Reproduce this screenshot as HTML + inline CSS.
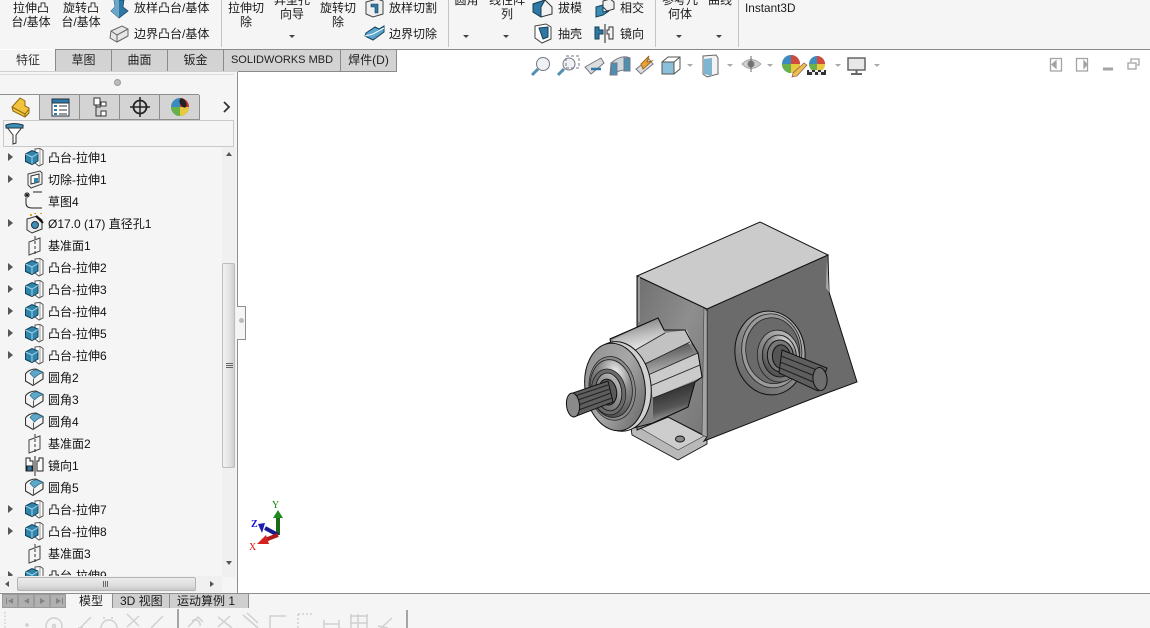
<!DOCTYPE html>
<html><head><meta charset="utf-8"><style>
html,body{margin:0;padding:0;width:1150px;height:628px;overflow:hidden;background:#fff;font-family:"Liberation Sans","Noto Sans CJK SC",sans-serif;font-size:12px;color:#111}
.a{position:absolute}
.t{position:absolute;white-space:nowrap;line-height:13px;font-size:12px;color:#1a1a1a}
.c{text-align:center}
.tab{position:absolute;top:50px;height:21px;background:#d3d3d3;border-right:1px solid #8a8a8a;border-bottom:1px solid #8a8a8a;text-align:center;line-height:21px;font-size:12px;color:#222;box-sizing:content-box}
.row{position:absolute;left:48px;white-space:nowrap;line-height:14px;font-size:12px;color:#111}
.sep{position:absolute;top:0;width:1px;height:47px;background:#c4c4c4}
.ar{position:absolute;width:0;height:0;border-left:3px solid transparent;border-right:3px solid transparent;border-top:3px solid #444}
.tw{position:absolute;left:8px;width:0;height:0;border-top:4px solid transparent;border-bottom:4px solid transparent;border-left:5px solid #555}
</style></head><body>
<svg width="0" height="0" style="position:absolute"><defs>
<g id="boss"><path d="M10 1 L15 0.500 L18 2.500 V16 L14 18 L10 15Z" fill="#fff" stroke="#555" stroke-width="1"/><path d="M15 1 V17" stroke="#999"/><path d="M0.500 6 L7 2.500 L13 5 V13 L7 16.500 L0.500 13.500Z" fill="#2f86ad" stroke="#123f58" stroke-width="1"/><path d="M0.500 6 L7 9 L13 5.500 M7 9 V16" fill="none" stroke="#a5d3e8" stroke-width="1"/></g>
<g id="cut"><path d="M2 4 L14 1 L16 3 V14 L5 18 L2 15Z" fill="#f2f2f2" stroke="#444"/><path d="M5 6 L13 4 V12 L5 14Z" fill="#fff" stroke="#333"/><path d="M8 8 h4 v4 l-4 1z" fill="#2f86ad"/></g>
<g id="fil"><path d="M0.500 6 C3 2 8 1 11 1 L18 4.500 V11 L8 17.500 L0.500 13Z" fill="#f4f4f4" stroke="#333" stroke-width="1.100"/><path d="M5 5.500 C7 2.500 10 1.500 12 2 L18 4.500 C15 5.500 12 7 9.500 10 Z" fill="#5fa7c8" stroke="#2b6a88" stroke-width=".7"/><path d="M8.500 10.500V17.500" stroke="#555"/></g>
<g id="pln"><path d="M1 4 L12 0 V13 L1 17Z" fill="none" stroke="#444"/><path d="M7 -2 V19" stroke="#333" stroke-dasharray="3 2"/></g>
</defs></svg>

<!-- Top toolbar -->
<div class="a" style="left:0;top:0;width:1150px;height:49px;background:#f5f5f5"></div>
<div class="a" style="left:56px;top:49px;width:1094px;height:1px;background:#8a8a8a"></div>
<div class="a" style="left:0;top:50px;width:56px;height:22px;background:#f5f5f5"></div>
<div class="t c" style="left:6px;top:1px;width:50px;line-height:14px">拉伸凸<br>台/基体</div>
<div class="t c" style="left:56px;top:1px;width:50px;line-height:14px">旋转凸<br>台/基体</div>
<svg class="a" style="left:108px;top:0" width="24" height="46"><path d="M6 0 H16 L15 7 L20 11 L11 18 L3 11 L7 7Z" fill="#2f78a5" stroke="#123f58" stroke-width=".7"/><path d="M11 0V18 L3 11 L7 7 L6 0Z" fill="#6aa7cb"/><path d="M3 31 L14 26 L20 29 L20 36 L9 42 L2 38Z" fill="#e6e6e6" stroke="#666"/><path d="M3 31 L9 35 L20 29 M9 35V42" fill="none" stroke="#666"/></svg>
<div class="t" style="left:134px;top:2px">放样凸台/基体</div>
<div class="t" style="left:134px;top:28px">边界凸台/基体</div>
<div class="sep" style="left:221px"></div>
<div class="t c" style="left:222px;top:1px;width:48px;line-height:14px">拉伸切<br>除</div>
<div class="t c" style="left:268px;top:-7px;width:48px;line-height:14px">异型孔<br>向导</div>
<div class="ar" style="left:289px;top:35px"></div>
<div class="t c" style="left:314px;top:1px;width:48px;line-height:14px">旋转切<br>除</div>
<svg class="a" style="left:363px;top:-1px" width="24" height="46"><path d="M3 3 L14 0 L20 2 V15 L10 18 L3 15Z" fill="#eee" stroke="#444"/><path d="M8 5 H15 V14 H12 V8 H8Z" fill="#2f78a5" stroke="#123f58" stroke-width=".6"/><path d="M3 34 L12 28 L16 30 L21 27 V33 L10 41 L2 37Z" fill="#5aa6cc" stroke="#123f58"/><path d="M2 37 L10 35 L21 29" stroke="#fff" fill="none"/></svg>
<div class="t" style="left:389px;top:2px">放样切割</div>
<div class="t" style="left:389px;top:28px">边界切除</div>
<div class="sep" style="left:448px"></div>
<div class="t c" style="left:450px;top:-6px;width:33px">圆角</div>
<div class="ar" style="left:463px;top:35px"></div>
<div class="t c" style="left:484px;top:-7px;width:46px;line-height:14px">线性阵<br>列</div>
<div class="ar" style="left:503px;top:35px"></div>
<svg class="a" style="left:532px;top:-1px" width="24" height="46"><path d="M1 5 L13 1 L20 8 V15 L9 18 L1 13Z" fill="#f2f2f2" stroke="#333"/><path d="M1 5 L13 1 L9 8 V18 L1 13Z" fill="#2f78a5" stroke="#123f58"/><path d="M3 27 L14 25 L19 28 V40 L10 44 L3 39Z" fill="#fff" stroke="#444"/><path d="M7 29 L16 28 V38 L11 40Z" fill="#2f78a5" stroke="#123f58"/></svg>
<div class="t" style="left:558px;top:2px">拔模</div>
<div class="t" style="left:558px;top:28px">抽壳</div>
<svg class="a" style="left:594px;top:-1px" width="24" height="46"><path d="M9 2 L16 0 L20 3 V10 L13 12 L9 8Z" fill="#f0f0f0" stroke="#333"/><path d="M2 8 L9 6 V13 L15 12 L9 16 L2 18Z" fill="#3b8db5" stroke="#123f58"/><path d="M1 28 H5 V31 H9 V35 H5 V40 H1Z" fill="#2f78a5" stroke="#123f58"/><path d="M11 25V44" stroke="#222"/><path d="M19 28 H15 V31 H13 V35 H15 V40 H19Z" fill="#f4f4f4" stroke="#333"/></svg>
<div class="t" style="left:620px;top:2px">相交</div>
<div class="t" style="left:620px;top:28px">镜向</div>
<div class="sep" style="left:655px"></div>
<div class="t c" style="left:656px;top:-7px;width:48px;line-height:14px">参考几<br>何体</div>
<div class="ar" style="left:676px;top:35px"></div>
<div class="t c" style="left:704px;top:-6px;width:32px">曲线</div>
<div class="ar" style="left:716px;top:35px"></div>
<div class="sep" style="left:738px"></div>
<div class="t" style="left:745px;top:2px;font-size:11.800px">Instant3D</div>

<!-- Command tabs -->
<div class="a" style="left:55px;top:49px;width:1px;height:23px;background:#8a8a8a"></div>
<div class="t" style="left:16px;top:54px;color:#333">特征</div>
<div class="tab" style="left:56px;width:55px">草图</div>
<div class="tab" style="left:112px;width:55px">曲面</div>
<div class="tab" style="left:168px;width:55px">钣金</div>
<div class="tab" style="left:224px;width:116px;font-size:11px">SOLIDWORKS MBD</div>
<div class="tab" style="left:341px;width:55px">焊件(D)</div>

<!-- Heads-up toolbar -->
<svg class="a" style="left:525px;top:50px" width="360" height="32">
<g fill="none" stroke="#778">
<circle cx="18" cy="14" r="6.500" fill="#eef2f4"/><path d="M13 19 L7 25" stroke="#4f8fb2" stroke-width="3"/>
<circle cx="44" cy="14" r="6" fill="#eef2f4"/><path d="M39 19 L33 25" stroke="#4f8fb2" stroke-width="3"/><rect x="41" y="6" width="13" height="12" stroke-dasharray="3 2"/>
<path d="M60 17 L76 8 L79 13 L66 24Z" fill="#ddd"/><path d="M66 19 H76" stroke="#2f78a5" stroke-width="2.500"/>
<path d="M86 13 Q97 4 105 8 V21 Q95 18 88 25 H85Z" fill="#cfd8dc"/><path d="M86 13V25 H92 V13Z M99 8 H105 V21 H99Z" fill="#4c8fb0"/>
<path d="M111 19 L124 9 L128 14 L116 24Z" fill="#ddd"/><path d="M116 14 L124 6 L122 12 L127 11 L118 19Z" fill="#e8a33c" stroke="#a36a1b"/>
<path d="M137 12 H149 V24 H137Z" fill="#8cc0da" stroke="#555"/><path d="M137 12 L143 7 H155 V19 L149 24 M149 12 L155 7" stroke="#555"/>
<path d="M178 6 L191 5 L193 8 V24 L182 27 L178 24V8Z" fill="#f3f3f3" stroke="#666"/><path d="M179 9 L187 8 V26 L179 24Z" fill="#7fb5d1" stroke="none"/>
<path d="M217 14 Q226 5 236 14 Q226 23 217 14Z" fill="#cfcfcf" stroke="#aaa"/><circle cx="226" cy="14" r="3.500" fill="#777" stroke="none"/><path d="M226 6V22" stroke="#666"/>
</g>
<circle cx="266" cy="14" r="9" fill="#3a8bc0"/><path d="M266 14 V5 A9 9 0 0 1 275 14Z" fill="#d14a3c"/><path d="M257 14 A9 9 0 0 0 266 23 V14Z" fill="#6ab04a"/><path d="M266 14 H275 A9 9 0 0 1 266 23Z" fill="#e8c93c"/><path d="M268 23 L279 13 L282 15 L272 26 L267 27Z" fill="#e8c050" stroke="#845" stroke-width=".6"/>
<circle cx="292" cy="14" r="8" fill="#3a8bc0"/><path d="M292 14 V6 A8 8 0 0 1 300 14Z" fill="#d14a3c"/><path d="M284 14 A8 8 0 0 0 292 22 V14Z" fill="#6ab04a"/><path d="M292 14 H300 A8 8 0 0 1 292 22Z" fill="#e8c93c"/>
<rect x="282" y="20" width="19" height="5" fill="#333"/><path d="M284 20h3v2h-3zM290 20h3v2h-3zM296 20h3v2h-3zM287 22h3v3h-3zM293 22h3v3h-3z" fill="#eee"/>
<rect x="323" y="8" width="17" height="12" fill="#e8e8e8" stroke="#666" stroke-width="1.500"/><path d="M331.500 20V23 M326 24H337" stroke="#666" stroke-width="2"/>
<g fill="#aaa"><path d="M162 14h6l-3 3z"/><path d="M202 14h6l-3 3z"/><path d="M242 14h6l-3 3z"/><path d="M310 14h6l-3 3z"/><path d="M349 14h6l-3 3z"/></g>
</svg>

<!-- Window controls -->
<svg class="a" style="left:1030px;top:50px" width="120" height="30" fill="none" stroke="#a3a3a3" stroke-width="1.300">
<rect x="20.500" y="8.500" width="11" height="12.500"/><path d="M26 11 L22 14.500 L26 18Z" fill="#a3a3a3"/>
<rect x="46.500" y="8.500" width="11" height="12.500"/><path d="M54 11 L57 14.500 L54 18Z" fill="#a3a3a3"/>
<path d="M73 19 H83" stroke-width="3"/>
<rect x="98" y="13" width="8" height="6"/><path d="M101 12 V9 H109 V15 H107"/>
</svg>

<!-- Left panel -->
<div class="a" style="left:0;top:72px;width:237px;height:521px;background:#f5f5f5"></div>
<div class="a" style="left:0;top:71px;width:238px;height:1px;background:#d0d0d0"></div>
<div class="a" style="left:237px;top:72px;width:1px;height:521px;background:#8e8e8e"></div>
<div class="a" style="left:0;top:74px;width:234px;height:1px;background:#dcdcdc"></div>
<div class="a" style="left:114px;top:79px;width:5px;height:5px;border-radius:50%;background:#bbb;border:1px solid #999"></div>
<div class="a" style="left:0;top:94px;width:199px;height:1px;background:#8e8e8e"></div>
<div class="a" style="left:39px;top:95px;width:160px;height:24px;background:#d4d4d4;border-bottom:1px solid #8e8e8e"></div>
<div class="a" style="left:39px;top:95px;width:1px;height:25px;background:#8e8e8e"></div>
<div class="a" style="left:79px;top:95px;width:1px;height:25px;background:#8e8e8e"></div>
<div class="a" style="left:119px;top:95px;width:1px;height:25px;background:#8e8e8e"></div>
<div class="a" style="left:159px;top:95px;width:1px;height:25px;background:#8e8e8e"></div>
<div class="a" style="left:199px;top:95px;width:1px;height:25px;background:#8e8e8e"></div>
<svg class="a" style="left:0;top:94px" width="236" height="26">
<path d="M12 13 L20 4 L25 7 V12 L29 14 V19 L25 23 L13 17Z" fill="#f3c33d" stroke="#8a6a10"/><path d="M12 13 L25 20 V23 M25 20 L29 15" stroke="#8a6a10" fill="none"/>
<rect x="52" y="5" width="17" height="17" fill="#fff" stroke="#234"/><rect x="52" y="5" width="17" height="4" fill="#2f78a5" stroke="#234"/><path d="M54 11h3v2h-3zM54 15h3v2h-3zM54 19h3v2h-3z" fill="#2f78a5"/><path d="M59 12H67M59 16H67M59 20H67" stroke="#333"/>
<path d="M94 4 H100 V11 H94Z M101 8 H106 V12 H101Z M101 17 H106 V22 H101Z" fill="#fff" stroke="#333"/><path d="M96 11V22 H101 M96 13H101" stroke="#333" fill="none"/>
<circle cx="140" cy="13" r="6.500" fill="none" stroke="#222" stroke-width="1.800"/><path d="M140 3V23 M130 13H150" stroke="#222" stroke-width="1.500"/>
<circle cx="180" cy="13" r="9" fill="#3a8bc0"/><path d="M180 13 V4 A9 9 0 0 1 189 13Z" fill="#c9372c"/><path d="M171 13 A9 9 0 0 0 180 22 V13Z" fill="#6ab04a"/><path d="M180 13 H189 A9 9 0 0 1 180 22Z" fill="#e8c93c"/><ellipse cx="183" cy="9" rx="3" ry="5" fill="#222" transform="rotate(-30 183 9)"/>
<path d="M224 8 L229 13 L224 18" fill="none" stroke="#333" stroke-width="1.800"/>
</svg>
<div class="a" style="left:3px;top:120px;width:229px;height:25px;border:1px solid #c9c9c9;background:#f5f5f5"></div>
<svg class="a" style="left:4px;top:122px" width="22" height="24"><path d="M2 4 L19 4 L12 13 V21 L9 22 V13Z" fill="#fff" stroke="#333"/><path d="M2 3 Q10 0 19 3 V6 H2Z" fill="#3d8fb8" stroke="#234"/></svg>

<!-- Tree rows -->
<div class="tw" style="top:153px"></div><svg class="a" style="left:25px;top:148px" width="20" height="19"><use href="#boss"/></svg><div class="row" style="top:151px">凸台-拉伸1</div>
<div class="tw" style="top:175px"></div><svg class="a" style="left:26px;top:170px" width="20" height="19"><use href="#cut"/></svg><div class="row" style="top:173px">切除-拉伸1</div>
<svg class="a" style="left:24px;top:190px" width="22" height="20" fill="none" stroke="#222"><path d="M9 2H18"/><path d="M2 8 V13 Q2 18 8 18 H18"/><path d="M3 2 V8 M0 5 H6 M1 3 L5 7 M5 3 L1 7" stroke-width=".9"/></svg><div class="row" style="top:195px">草图4</div>
<div class="tw" style="top:219px"></div><svg class="a" style="left:25px;top:213px" width="20" height="21"><path d="M2 6 L12 3 L17 7 V16 L7 20 L2 17Z" fill="#eee" stroke="#333"/><circle cx="10" cy="12" r="3.500" fill="#3d8fb8" stroke="#234"/><path d="M11 3 L18 10" stroke="#111" stroke-width="2"/><path d="M5 2h2M9 0h2M15 0h2" stroke="#d9a520" stroke-width="2"/></svg><div class="row" style="top:217px">Ø17.0 (17) 直径孔1</div>
<svg class="a" style="left:28px;top:236px" width="14" height="20"><use href="#pln" y="2"/></svg><div class="row" style="top:239px">基准面1</div>
<div class="tw" style="top:263px"></div><svg class="a" style="left:25px;top:258px" width="20" height="19"><use href="#boss"/></svg><div class="row" style="top:261px">凸台-拉伸2</div>
<div class="tw" style="top:285px"></div><svg class="a" style="left:25px;top:280px" width="20" height="19"><use href="#boss"/></svg><div class="row" style="top:283px">凸台-拉伸3</div>
<div class="tw" style="top:307px"></div><svg class="a" style="left:25px;top:302px" width="20" height="19"><use href="#boss"/></svg><div class="row" style="top:305px">凸台-拉伸4</div>
<div class="tw" style="top:329px"></div><svg class="a" style="left:25px;top:324px" width="20" height="19"><use href="#boss"/></svg><div class="row" style="top:327px">凸台-拉伸5</div>
<div class="tw" style="top:351px"></div><svg class="a" style="left:25px;top:346px" width="20" height="19"><use href="#boss"/></svg><div class="row" style="top:349px">凸台-拉伸6</div>
<svg class="a" style="left:25px;top:368px" width="20" height="19"><use href="#fil"/></svg><div class="row" style="top:371px">圆角2</div>
<svg class="a" style="left:25px;top:390px" width="20" height="19"><use href="#fil"/></svg><div class="row" style="top:393px">圆角3</div>
<svg class="a" style="left:25px;top:412px" width="20" height="19"><use href="#fil"/></svg><div class="row" style="top:415px">圆角4</div>
<svg class="a" style="left:28px;top:434px" width="14" height="20"><use href="#pln" y="2"/></svg><div class="row" style="top:437px">基准面2</div>
<svg class="a" style="left:25px;top:456px" width="20" height="20" fill="none" stroke="#222"><path d="M1 2 H5 V5 H8 V15 H1Z" fill="#fff"/><rect x="2" y="10" width="5" height="5" fill="#2f78a5"/><path d="M10 0V20"/><path d="M18 2 H14 V5 H12 V15 H18Z" fill="#fff"/></svg><div class="row" style="top:459px">镜向1</div>
<svg class="a" style="left:25px;top:478px" width="20" height="19"><use href="#fil"/></svg><div class="row" style="top:481px">圆角5</div>
<div class="tw" style="top:505px"></div><svg class="a" style="left:25px;top:500px" width="20" height="19"><use href="#boss"/></svg><div class="row" style="top:503px">凸台-拉伸7</div>
<div class="tw" style="top:527px"></div><svg class="a" style="left:25px;top:522px" width="20" height="19"><use href="#boss"/></svg><div class="row" style="top:525px">凸台-拉伸8</div>
<svg class="a" style="left:28px;top:544px" width="14" height="20"><use href="#pln" y="2"/></svg><div class="row" style="top:547px">基准面3</div>
<div class="a" style="left:0;top:564px;width:222px;height:12px;overflow:hidden"><div class="tw" style="top:7px"></div><svg class="a" style="left:25px;top:2px" width="20" height="19"><use href="#boss"/></svg><div class="row" style="top:5px">凸台-拉伸9</div></div>

<!-- Scrollbars -->
<div class="a" style="left:222px;top:147px;width:14px;height:430px;background:#f0f0f0"></div>
<div class="a" style="left:222px;top:263px;width:13px;height:205px;background:linear-gradient(90deg,#f2f2f2,#e2e2e2 60%,#cfcfcf);border:1px solid #bdbdbd;border-radius:2px;box-sizing:border-box"></div>
<svg class="a" style="left:222px;top:147px" width="14" height="430"><path d="M4 9 L7 5 L10 9Z" fill="#555"/><path d="M4 414 L7 418 L10 414Z" fill="#555"/><path d="M4 216.500H11M4 218.500H11M4 220.500H11" stroke="#666"/></svg>
<div class="a" style="left:0;top:576px;width:222px;height:16px;background:#f0f0f0"></div>
<div class="a" style="left:17px;top:577px;width:179px;height:14px;background:linear-gradient(#ececec,#dedede 60%,#c8c8c8);border:1px solid #b5b5b5;border-radius:2px;box-sizing:border-box"></div>
<svg class="a" style="left:0;top:577px" width="222" height="14"><path d="M9 4 L5 7 L9 10Z M210 4 L214 7 L210 10Z" fill="#555"/><path d="M103.500 4V10M105.500 4V10M107.500 4V10" stroke="#666"/></svg>
<div class="a" style="left:237px;top:306px;width:9px;height:34px;background:#f5f5f5;border:1px solid #8e8e8e;border-left:none;box-sizing:border-box"></div>
<div class="a" style="left:239px;top:318px;width:5px;height:5px;border-radius:50%;background:#bbb"></div>

<!-- 3D model -->
<svg class="a" style="left:545px;top:210px" width="330" height="265" viewBox="545 210 330 265">
<defs>
<linearGradient id="lf" x1="0" y1="0" x2="1" y2="1"><stop offset="0" stop-color="#6f6f6f"/><stop offset=".5" stop-color="#8e8e8e"/><stop offset="1" stop-color="#757575"/></linearGradient>
<linearGradient id="fl" x1="0" y1="0" x2="1" y2="1"><stop offset="0" stop-color="#8c8c8c"/><stop offset=".5" stop-color="#a8a8a8"/><stop offset="1" stop-color="#5e5e5e"/></linearGradient>
<linearGradient id="ring" x1="1" y1="0" x2="0" y2="1"><stop offset="0" stop-color="#c9c9c9"/><stop offset=".5" stop-color="#8c8c8c"/><stop offset="1" stop-color="#5c5c5c"/></linearGradient>
<radialGradient id="hub" cx=".65" cy=".25" r=".8"><stop offset="0" stop-color="#f4f4f4"/><stop offset=".45" stop-color="#8e8e8e"/><stop offset="1" stop-color="#4a4a4a"/></radialGradient>
<linearGradient id="la" x1="0" y1="0" x2=".3" y2="1"><stop offset="0" stop-color="#6c6c6c"/><stop offset=".6" stop-color="#bdbdbd"/><stop offset="1" stop-color="#e8e8e8"/></linearGradient>
<linearGradient id="gr" x1="0" y1="0" x2=".3" y2="1"><stop offset="0" stop-color="#3c3c3c"/><stop offset="1" stop-color="#b8b8b8"/></linearGradient>
<linearGradient id="gl" x1="0" y1="0" x2=".3" y2="1"><stop offset="0" stop-color="#1e1e1e"/><stop offset=".7" stop-color="#555"/><stop offset="1" stop-color="#a5a5a5"/></linearGradient>
</defs>
<!-- foot -->
<path d="M631 428 L668 412 L707 437 L707 444 L678 460 L632 435Z" fill="#b9b9b9" stroke="#111" stroke-width=".9"/>
<path d="M640 428 L668 417 L704 436 L678 450Z" fill="#cdcdcd" stroke="#444" stroke-width=".6"/>
<ellipse cx="680" cy="439" rx="4.500" ry="3" fill="#8a8a8a" stroke="#111"/>
<!-- body -->
<path d="M637 276 L707 309 V437 L668 417 L637 430Z" fill="url(#lf)" stroke="#111"/>
<path d="M707 309 L828 255 L829 292 L857 382 L827 393 L704 441 L707 437Z" fill="#6b6b6b" stroke="#111"/>
<path d="M637 276 L760 222 L828 255 L707 309Z" fill="#cbcbcb" stroke="#111"/>
<path d="M704 308 L707 311 V437 L702 435Z" fill="#a5a5a5" stroke="#333" stroke-width=".5"/>
<path d="M639 277 V322" stroke="#9a9a9a" stroke-width="2"/>
<path d="M827 256 L829 292 L826 288Z" fill="#aaa"/>
<!-- right hub -->
<g transform="rotate(-6 770 353)">
<ellipse cx="770" cy="353" rx="35" ry="42" fill="url(#ring)" stroke="#111"/>
<ellipse cx="772" cy="351" rx="30" ry="37" fill="#9a9a9a" stroke="#222" stroke-width=".8"/>
<ellipse cx="773" cy="351" rx="27" ry="33" fill="#6a6a6a" stroke="#222" stroke-width=".8"/>
<ellipse cx="778" cy="357" rx="21" ry="26" fill="url(#ring)" stroke="#222" stroke-width=".8"/>
<ellipse cx="779" cy="357" rx="17" ry="21" fill="url(#hub)" stroke="#111" stroke-width=".8"/>
<ellipse cx="780" cy="357" rx="13" ry="16" fill="#777" stroke="#111"/>
<ellipse cx="781" cy="358" rx="9" ry="12" fill="#555" stroke="#111"/>
</g>
<path d="M782 350 L827 368 L818 391 L779 373Z" fill="#5e5e5e" stroke="#111"/>
<path d="M781 356 L822 372 M780 362 L820 378 M780 368 L818 384" stroke="#222" stroke-width="1.200"/>
<ellipse cx="820" cy="379" rx="7" ry="11.500" fill="#6e6e6e" stroke="#111" transform="rotate(-6 820 379)"/>
<!-- left spline housing -->
<path d="M610 339 L658 318 L664 330 L685 330 L692 343 L698 353 L702 377 L695 382 L688 407 L653 423 L626 430Z" fill="#858585" stroke="#111"/>
<path d="M612 340 L658 318 L665 333 L632 352Z" fill="url(#la)"/>
<path d="M632 352 L665 333 L687 330 L692 343 L645 363Z" fill="#c2c2c2"/>
<path d="M645 365 L688 343 L695 353 L648 375Z" fill="url(#gr)"/>
<path d="M648 375 L698 353 L702 377 L653 398Z" fill="#cbcbcb"/>
<path d="M653 398 L695 382 L688 407 L653 422Z" fill="url(#gl)"/>
<path d="M632 352 L665 333 M645 364 L690 342 M648 375 L698 353 M650 386 L700 365 M653 398 L697 381" stroke="#222" stroke-width=".9" fill="none"/>
<path d="M610 339 L658 318 L664 330 L685 330 L692 343 L698 353 L702 377 L695 382 L688 407 L653 423" fill="none" stroke="#111"/>
<!-- flange -->
<g transform="rotate(-8 615 387)">
<ellipse cx="619" cy="387" rx="32" ry="45" fill="#d0d0d0" stroke="#111"/>
<ellipse cx="615" cy="387" rx="30" ry="44" fill="url(#fl)" stroke="#111"/>
<ellipse cx="612" cy="388" rx="23" ry="32" fill="#8a8a8a" stroke="#222" stroke-width=".7"/>
<ellipse cx="611" cy="388" rx="21" ry="29" fill="url(#hub)" stroke="#222" stroke-width=".8"/>
<ellipse cx="608" cy="391" rx="17" ry="23" fill="#6a6a6a" stroke="#222" stroke-width=".8"/>
<ellipse cx="608" cy="391" rx="13" ry="19" fill="url(#ring)" stroke="#111" stroke-width=".8"/>
<ellipse cx="607" cy="391" rx="9" ry="13" fill="#5a5a5a" stroke="#111"/>
</g>
<!-- left shaft -->
<path d="M570 394 L608 381 L613 402 L574 417Z" fill="#5e5e5e" stroke="#111"/>
<path d="M572 397 L608 385 M572 402 L610 389 M573 407 L611 393 M573 412 L612 398" stroke="#222" stroke-width="1.100"/>
<ellipse cx="573" cy="405" rx="6.500" ry="12" fill="#8a8a8a" stroke="#111" transform="rotate(-6 573 405)"/>
</svg>

<!-- Triad -->
<svg class="a" style="left:245px;top:495px" width="42" height="60">
<path d="M33 40 V22" stroke="#1a6a1a" stroke-width="4"/><path d="M28 23 L33 15 L38 23Z" fill="#1f8a1f"/>
<path d="M33 40 L20 33" stroke="#1a1a90" stroke-width="4"/><path d="M20 28 L13 29 L17 38Z" fill="#1c1cb0"/>
<path d="M33 40 L20 45" stroke="#b01a1a" stroke-width="4"/><path d="M21 40 L12 49 L24 49Z" fill="#d82020"/>
<text x="27" y="13" font-size="10" fill="#0a8a0a" font-family="'Liberation Serif',serif">Y</text>
<text x="6" y="32" font-size="10" font-weight="bold" fill="#1414d8" font-family="'Liberation Serif',serif">Z</text>
<text x="4" y="55" font-size="10" fill="#e01010" font-family="'Liberation Serif',serif">X</text>
</svg>

<!-- Bottom -->
<div class="a" style="left:0;top:593px;width:1150px;height:1px;background:#8e8e8e"></div>
<div class="a" style="left:0;top:594px;width:1150px;height:34px;background:#f5f5f5"></div>
<svg class="a" style="left:2px;top:594px" width="65" height="14"><rect width="64" height="14" fill="#b4b4b4"/><g stroke="#9c9c9c"><path d="M0.500 .5h15v13h-15zM16.500 .5h15v13h-15zM32.500 .5h15v13h-15zM48.500 .5h15v13h-15z" fill="#b0b0b0"/></g><g fill="#848484"><path d="M11 4 L6 7 L11 10Z M4 4h1v6h-1z M27 4 L22 7 L27 10Z M38 4 L43 7 L38 10Z M54 4 L59 7 L54 10Z M60 4h1v6h-1z"/></g></svg>
<div class="t" style="left:79px;top:595px">模型</div>
<div class="a" style="left:112px;top:594px;width:137px;height:14px;background:#cfcfcf;border-right:1px solid #8e8e8e;border-left:1px solid #8e8e8e;box-sizing:border-box"></div>
<div class="a" style="left:169px;top:594px;width:1px;height:14px;background:#8e8e8e"></div>
<div class="t" style="left:120px;top:595px">3D 视图</div>
<div class="t" style="left:177px;top:595px">运动算例 1</div>
<svg class="a" style="left:0;top:609px" width="420" height="19" fill="none" stroke="#d0d0d0" stroke-width="1.500">
<path d="M5 3V19" stroke-dasharray="1.500 2"/>
<circle cx="27" cy="16" r="1" stroke="#ccc"/>
<circle cx="54" cy="17" r="8"/><circle cx="54" cy="17" r="1.500"/>
<path d="M80 19 L91 8 M78 19h5"/>
<path d="M101 19 A8 8 0 0 1 117 19"/><path d="M103 9 h2 M111 9h2"/>
<path d="M127 5 L139 17 M127 18 L139 7"/>
<path d="M151 19 L163 7"/>
<path d="M178 0 V19" stroke="#555" stroke-width="1"/>
<path d="M188 18 L198 8 L203 13 M192 12 A5 5 0 0 1 200 17"/>
<path d="M218 8 L232 19 M218 18 L230 7"/>
<path d="M243 6 L258 19 M247 4 L258 14"/>
<path d="M270 19 V7 H286"/>
<path d="M298 5 V19 M298 5 H313" stroke-dasharray="2 2"/>
<path d="M324 11V19 M339 11V19 M324 15H339"/>
<path d="M351 5V19 M358 5V19 M367 5V19 M350 7H368 M350 14H368"/>
<path d="M381 19 L392 9 M378 17 L388 19"/>
<path d="M407 1V19" stroke="#555" stroke-width="1"/>
</svg>
</body></html>
